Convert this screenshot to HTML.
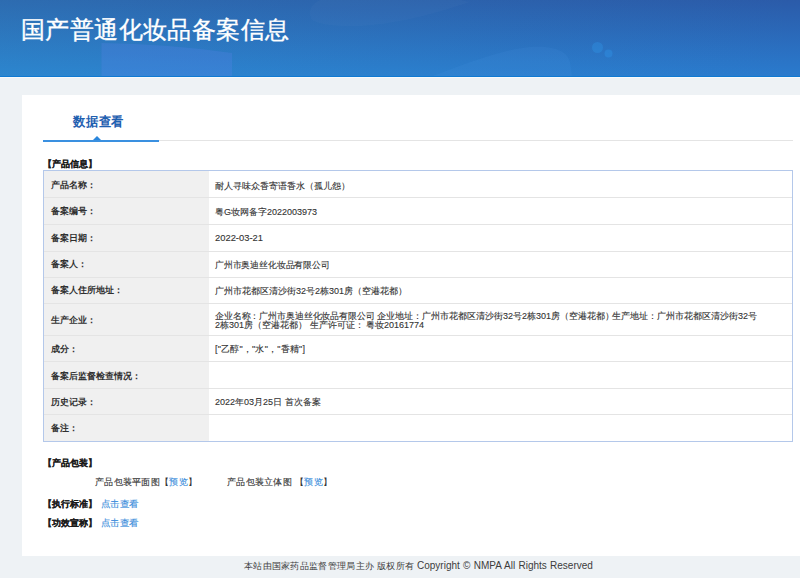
<!DOCTYPE html>
<html><head><meta charset="utf-8">
<style>
*{margin:0;padding:0;box-sizing:border-box}
html,body{width:800px;height:578px;overflow:hidden;background:#eef2f5;font-family:"Liberation Sans",sans-serif;color:#333}
.a{position:absolute;white-space:nowrap}
#hdr{position:absolute;left:0;top:0;width:800px;height:77px;background:linear-gradient(90deg,rgba(56,195,214,0.16) 0%,rgba(56,195,214,0.06) 60%,rgba(56,195,214,0) 100%),linear-gradient(180deg,#2b5ba9 0%,#2a7bce 100%);overflow:hidden}
#hdr .bl{position:absolute;left:0;top:76px;width:800px;height:1px;background:#0f7ad2}
#hdr .wl{position:absolute;left:0;top:77px;width:800px;height:1px;background:#f8f9fa}
#title{left:21px;top:15px;font-size:24px;font-weight:500;-webkit-text-stroke:0.35px #fff;letter-spacing:0.4px;color:#fff;line-height:30px}
#panel{position:absolute;left:22px;top:95px;width:800px;height:461px;background:#fff}
#tab{left:73px;top:112px;font-size:12px;letter-spacing:0.5px;transform:scale(1.02,1.08);transform-origin:0 0;font-weight:bold;color:#1f60b0;line-height:18px}
#tabline{position:absolute;left:43px;top:140px;width:750px;height:1px;background:#e4e4e4}
#tabblue{position:absolute;left:43px;top:140px;width:116px;height:2px;background:#3a90e0}
#tri{position:absolute;left:92.5px;top:135.5px;width:0;height:0;border-left:4.2px solid transparent;border-right:4.2px solid transparent;border-bottom:4.6px solid #2a86dc}
.h{font-size:9px;font-weight:bold;color:#1a1a1a;line-height:10px;-webkit-text-stroke:0.1px #1a1a1a}
#tbl{position:absolute;left:43px;top:170px;width:750px;height:272px;border:1px solid #b4c8ea;background:#fff}
#lcol{position:absolute;left:44px;top:171px;width:165px;height:270px;background:#f0f0f0}
.sep{position:absolute;left:44px;width:748px;height:1px;background:#e4e4e4}
.t{position:absolute;white-space:nowrap;font-size:9px;line-height:10px;color:#333;-webkit-text-stroke:0.12px currentColor}
.l{left:51px;font-weight:bold;color:#303030;-webkit-text-stroke:0 #333}
.v{left:215px}
.lk{color:#3b8ddb}
#foot{left:244px;top:561px;font-size:9px;line-height:10px;color:#3c3c3c}
</style></head><body>
<div id="hdr"><svg width="800" height="77" style="position:absolute;left:0;top:0">
<path d="M101.5,43 Q170,44 232,53 L232,77 L101.5,77 Z" fill="rgba(100,130,240,0.22)"/>
<path d="M312,20 C300,0 340,-15 400,-10 C440,-6 460,0 470,2 C440,12 400,24 360,26 C335,27 318,24 312,20 Z" fill="rgba(255,255,255,0.02)"/>
<path d="M430,77 C470,62 500,50 530,47 C555,45 568,52 570,62 L572,77 Z" fill="rgba(90,170,240,0.09)"/>
<circle cx="597.5" cy="47.5" r="5.5" fill="rgba(50,160,245,0.28)"/>
<circle cx="608.5" cy="53.5" r="4" fill="rgba(50,160,245,0.3)"/>
</svg><div class="bl"></div></div>
<div class="a" style="left:0;top:77px;width:800px;height:1px;background:#f7f9fb"></div>
<div id="title" class="a">国产普通化妆品备案信息</div>
<div id="panel"></div>
<div id="tab" class="a">数据查看</div>
<div id="tabline"></div><div id="tabblue"></div><div id="tri"></div>
<div class="a h" style="left:43px;top:159px">【产品信息】</div>
<div id="tbl"></div>
<div id="lcol"></div>
<div class="sep" style="top:197px"></div>
<div class="sep" style="top:224px"></div>
<div class="sep" style="top:251px"></div>
<div class="sep" style="top:277px"></div>
<div class="sep" style="top:303px"></div>
<div class="sep" style="top:335px"></div>
<div class="sep" style="top:361px"></div>
<div class="sep" style="top:388px"></div>
<div class="sep" style="top:414px"></div>

<div class="t l" style="top:180px">产品名称：</div><div class="t v" style="top:181px">耐人寻味众香寄语香水（孤儿怨）</div>
<div class="t l" style="top:206px">备案编号：</div><div class="t v" style="top:207px">粤G妆网备字2022003973</div>
<div class="t l" style="top:233px">备案日期：</div><div class="t v" style="top:233px;font-size:9.4px">2022-03-21</div>
<div class="t l" style="top:259px">备案人：</div><div class="t v" style="top:260px;transform:scaleX(0.98);transform-origin:0 0">广州市奥迪丝化妆品有限公司</div>
<div class="t l" style="top:285px">备案人住所地址：</div><div class="t v" style="top:286px">广州市花都区清沙街32号2栋301房（空港花都）</div>
<div class="t l" style="top:315px">生产企业：</div><div class="t v" style="top:311px;transform:scaleX(0.985);transform-origin:0 0">企业名称：广州市奥迪丝化妆品有限公司</div><div class="t" style="left:377px;top:311px">企业地址：广州市花都区清沙街32号2栋301房（空港花都）</div><div class="t" style="left:612px;top:311px">生产地址：广州市花都区清沙街32号</div>
<div class="t v" style="top:320px">2栋301房（空港花都） 生产许可证： 粤妆20161774</div>
<div class="t l" style="top:344px">成分：</div><div class="t v" style="top:344px;letter-spacing:0.2px">["乙醇"，"水"，"香精"]</div>
<div class="t l" style="top:371px">备案后监督检查情况：</div>
<div class="t l" style="top:397px">历史记录：</div><div class="t v" style="top:397px">2022年03月25日 首次备案</div>
<div class="t l" style="top:423px">备注：</div>

<div class="a h" style="left:43px;top:458px">【产品包装】</div>
<div class="t" style="left:95px;top:477px;letter-spacing:0.3px">产品包装平面图【<span class="lk">预览</span>】</div>
<div class="t" style="left:227px;top:477px;letter-spacing:0.3px">产品包装立体图 【<span class="lk">预览</span>】</div>
<div class="a h" style="left:43px;top:499px">【执行标准】</div><div class="t lk" style="left:101px;top:499px;transform:scaleX(1.05);transform-origin:0 0">点击查看</div>
<div class="a h" style="left:43px;top:518px">【功效宣称】</div><div class="t lk" style="left:101px;top:518px;transform:scaleX(1.05);transform-origin:0 0">点击查看</div>
<div id="foot" class="a"><span style="letter-spacing:0.3px">本站由国家药品监督管理局主办 版权所有 </span><span style="font-size:10px;word-spacing:0.5px">Copyright © NMPA All Rights Reserved</span></div>
</body></html>
